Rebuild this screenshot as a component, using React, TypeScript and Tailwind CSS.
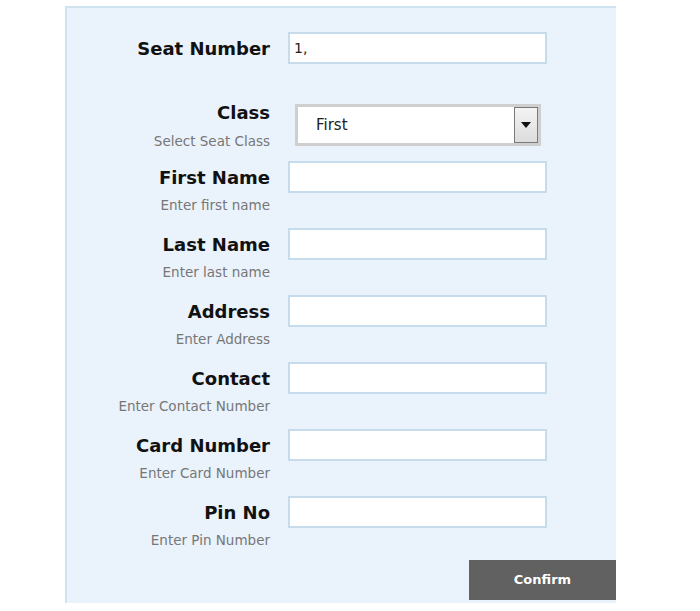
import React from "react";

const fields = [
  { label: "First Name", hint: "Enter first name" },
  { label: "Last Name", hint: "Enter last name" },
  { label: "Address", hint: "Enter Address" },
  { label: "Contact", hint: "Enter Contact Number" },
  { label: "Card Number", hint: "Enter Card Number" },
  { label: "Pin No", hint: "Enter Pin Number" },
];

const inputClass =
  "w-[259px] h-[32px] bg-white border-2 border-[#c6dced] outline-none px-[4px] text-[14px] text-[#222]";

export default function App() {
  return (
    <div className="w-[700px] h-[611px] bg-white font-['DejaVu_Sans',Verdana,sans-serif] pt-[6px]">
      <div className="ml-[65px] w-[551px] h-[597px] bg-[#eaf2fb] border-l-2 border-t-2 border-[#d0e3f1] flex flex-col pt-[24px]">
        {/* seat number */}
        <div className="flex h-[64px] items-start">
          <div className="w-[203px] h-[32px] flex items-center justify-end text-[18px] font-bold text-[#111]">
            Seat Number
          </div>
          <div className="ml-[18px]">
            <input className={inputClass} defaultValue="1," readOnly />
          </div>
        </div>

        {/* class */}
        <div className="flex h-[65px] items-start">
          <div className="w-[203px] flex flex-col items-end">
            <div className="h-[32px] flex items-center text-[18px] font-bold text-[#111]">Class</div>
            <div className="h-[26px] flex items-center text-[13.5px] text-[#777]">Select Seat Class</div>
          </div>
          <div className="ml-[25px] mt-[8px] w-[246px] h-[42px] bg-white border-[3px] border-[#cfcfcf] flex items-center justify-between">
            <span className="pl-[18px] text-[15px] text-[#222]">First</span>
            <div className="w-[24px] h-[36px] border border-[#7a7a7a] bg-[linear-gradient(#f4f4f4,#dcdcdc)] flex items-center justify-center">
              <svg width="10" height="6" viewBox="0 0 10 6">
                <path d="M0 0 H10 L5 6 Z" fill="#111" />
              </svg>
            </div>
          </div>
        </div>

        {fields.map((f, i) => (
          <div key={f.label} className={`flex items-start ${i === fields.length - 1 ? "h-[64px]" : "h-[67px]"}`}>
            <div className="w-[203px] flex flex-col items-end">
              <div className="h-[32px] flex items-center text-[18px] font-bold text-[#111]">{f.label}</div>
              <div className="h-[24px] flex items-center text-[13.5px] text-[#777]">{f.hint}</div>
            </div>
            <div className="ml-[18px]">
              <input className={inputClass} />
            </div>
          </div>
        ))}

        <div className="flex justify-end">
          <button className="w-[147px] h-[40px] bg-[#616161] text-white text-[13px] font-bold">Confirm</button>
        </div>
      </div>
    </div>
  );
}
